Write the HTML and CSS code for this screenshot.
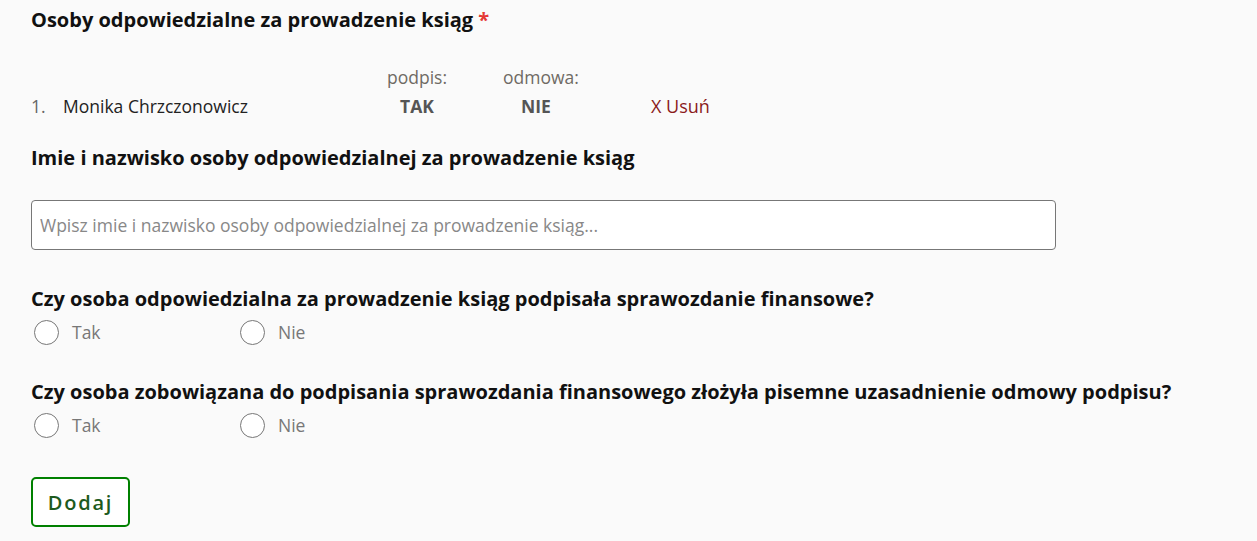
FILE: index.html
```html
<!DOCTYPE html>
<html lang="pl">
<head>
<meta charset="utf-8">
<title>Osoby odpowiedzialne</title>
<link rel="stylesheet" href="styles.css">
</head>
<body>
<div class="page">
  <h2 class="title">Osoby odpowiedzialne za prowadzenie ksiąg <span class="req">*</span></h2>

  <div class="persons">
    <div class="row head">
      <span></span><span></span>
      <span class="lbl">podpis:</span>
      <span class="lbl">odmowa:</span>
      <span></span>
    </div>
    <div class="row item">
      <span class="num">1.</span>
      <span class="name">Monika Chrzczonowicz</span>
      <span class="val val-1">TAK</span>
      <span class="val val-2">NIE</span>
      <a class="remove" href="#">X Usuń</a>
    </div>
  </div>

  <h3 class="label name-label">Imie i nazwisko osoby odpowiedzialnej za prowadzenie ksiąg</h3>
  <input class="text" type="text" placeholder="Wpisz imie i nazwisko osoby odpowiedzialnej za prowadzenie ksiąg...">

  <h3 class="label q1">Czy osoba odpowiedzialna za prowadzenie ksiąg podpisała sprawozdanie finansowe?</h3>
  <div class="radios">
    <label class="radio"><span class="circle"></span>Tak</label>
    <label class="radio"><span class="circle"></span>Nie</label>
  </div>

  <h3 class="label q2">Czy osoba zobowiązana do podpisania sprawozdania finansowego złożyła pisemne uzasadnienie odmowy podpisu?</h3>
  <div class="radios">
    <label class="radio"><span class="circle"></span>Tak</label>
    <label class="radio"><span class="circle"></span>Nie</label>
  </div>

  <button class="add" type="button">Dodaj</button>
</div>
</body>
</html>
```
FILE: styles.css
```css
html, body {
  margin: 0;
  padding: 0;
  background: #fafafa;
}
body {
  font-family: "Open Sans", "Noto Sans", sans-serif;
  color: #222;
}
.page {
  padding: 8px 0 0 31px;
  display: flex;
  flex-direction: column;
  align-items: flex-start;
}
.title {
  margin: 0;
  font-size: 20px;
  line-height: 24px;
  font-weight: 700;
  color: #111;
}
.req {
  color: #e53935;
}
.persons {
  margin-top: 33px;
  display: flex;
  flex-direction: column;
}
.row {
  display: grid;
  grid-template-columns: 32px 324px 116px 148px auto;
  align-items: center;
}
.head {
  height: 24px;
  font-size: 17.5px;
  color: #6f6a64;
}
.item {
  margin-top: 5px;
  height: 24px;
  font-size: 17.5px;
}
.num {
  color: #666;
}
.name {
  color: #222;
}
.val {
  font-weight: 700;
  color: #555;
}
.val-1 { padding-left: 13px; }
.val-2 { padding-left: 18px; }
.remove {
  color: #8b1a1a;
  text-decoration: none;
  font-size: 18px;
}
.label {
  margin: 0;
  font-size: 20px;
  line-height: 24px;
  font-weight: 700;
  color: #111;
}
.name-label {
  margin-top: 28px;
}
.text {
  margin-top: 30px;
  box-sizing: border-box;
  width: 1025px;
  height: 50px;
  border: 1px solid #777;
  border-radius: 4px;
  background: #fff;
  padding: 0 8px;
  font-family: "Open Sans", "Noto Sans", sans-serif;
  font-size: 17.5px;
  color: #222;
}
.text::placeholder {
  color: #888;
}
.q1 {
  margin-top: 37px;
}
.q2 {
  margin-top: 36px;
}
.radios {
  display: flex;
  margin-top: 9px;
}
.radio {
  display: flex;
  align-items: center;
  width: 203px;
  height: 24px;
  font-size: 17.5px;
  color: #777;
  padding-left: 3px;
}
.circle {
  box-sizing: border-box;
  width: 25px;
  height: 25px;
  border: 1px solid #777;
  border-radius: 50%;
  background: #fff;
  margin-right: 13px;
  flex: none;
}
.add {
  margin-top: 40px;
  box-sizing: border-box;
  width: 99px;
  height: 50px;
  border: 2px solid #008000;
  border-radius: 5px;
  background: #fff;
  font-family: "Open Sans", "Noto Sans", sans-serif;
  font-size: 20px;
  font-weight: 600;
  letter-spacing: 1.8px;
  color: #1d5a1d;
  padding: 0;
}
```
